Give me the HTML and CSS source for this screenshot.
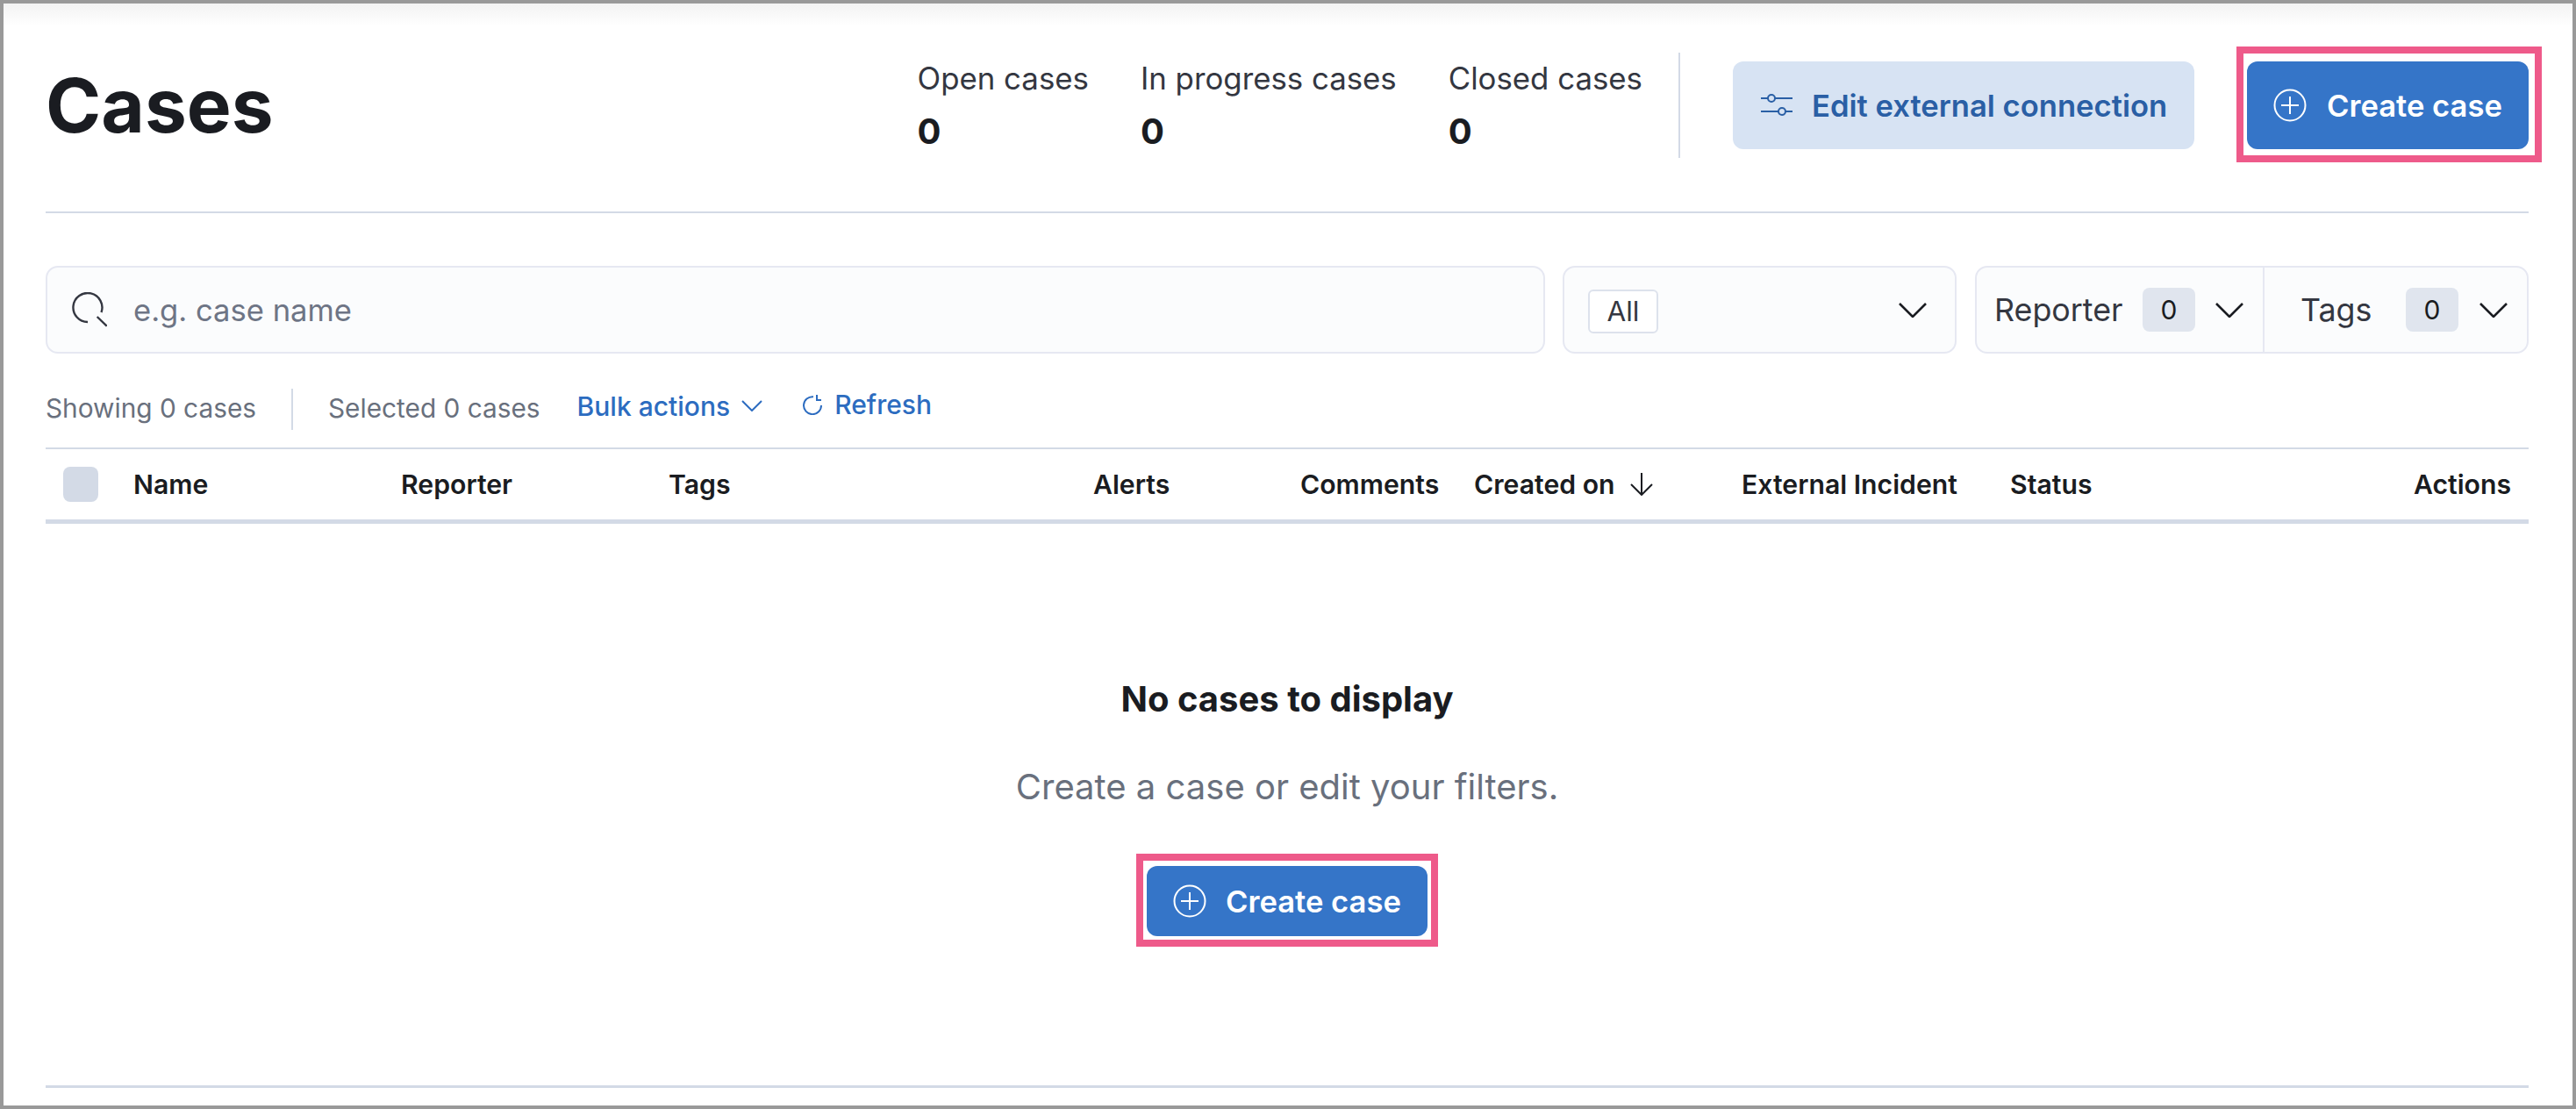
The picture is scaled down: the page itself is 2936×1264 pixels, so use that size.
FILE: index.html
```html
<!DOCTYPE html>
<html>

<head>
    <title>Cases</title>
    <meta charset="utf-8">
    <link rel="stylesheet" href="styles.css">
</head>

<body>
    <div class="frame">
        <header class="page-header">
            <h1 class="page-title">Cases</h1>
            <div class="stat">
                <span class="stat-label">Open cases</span>
                <span class="stat-value">0</span>
            </div>
            <div class="stat">
                <span class="stat-label">In progress cases</span>
                <span class="stat-value">0</span>
            </div>
            <div class="stat">
                <span class="stat-label">Closed cases</span>
                <span class="stat-value">0</span>
            </div>
            <div class="header-rule"></div>
            <button class="btn btn-light">
                <svg class="icon-controls" viewBox="0 0 36 26" fill="none" stroke="currentColor" stroke-width="2">
                    <path d="M0 5h8M16 5h20" />
                    <circle cx="12" cy="5" r="4" />
                    <path d="M0 20h20M28 20h8" />
                    <circle cx="24" cy="20" r="4" />
                </svg>
                Edit external connection
            </button>
            <div class="callout callout-top">
                <button class="btn btn-primary">
                    <svg class="icon-plus" viewBox="0 0 38 38" fill="none" stroke="currentColor" stroke-width="2">
                        <circle cx="19" cy="19" r="17.5" />
                        <path d="M19 9v20M9 19h20" />
                    </svg>
                    Create case
                </button>
            </div>
        </header>

        <div class="filters">
            <div class="search">
                <svg class="icon-search" viewBox="0 0 40 40" fill="none" stroke="#343741" stroke-width="2.4">
                    <path d="M18 34A16.5 16.5 0 1 1 33.5 23" />
                    <path d="M28.7 28L39.7 38.7" />
                </svg>
                <input class="search-input" type="text" placeholder="e.g. case name">
            </div>
            <div class="status-select">
                <span class="status-badge">All</span>
                <svg class="chevron" viewBox="0 0 32 17" fill="none" stroke="#1a1c21" stroke-width="2.6">
                    <path d="M1 1l15 15L31 1" />
                </svg>
            </div>
            <div class="filter-group">
                <div class="filter-item filter-reporter">
                    <span class="filter-name">Reporter</span>
                    <span class="filter-count">0</span>
                    <svg class="chevron" viewBox="0 0 32 17" fill="none" stroke="#1a1c21" stroke-width="2.6">
                        <path d="M1 1l15 15L31 1" />
                    </svg>
                </div>
                <div class="filter-item filter-tags">
                    <span class="filter-name">Tags</span>
                    <span class="filter-count">0</span>
                    <svg class="chevron" viewBox="0 0 32 17" fill="none" stroke="#1a1c21" stroke-width="2.6">
                        <path d="M1 1l15 15L31 1" />
                    </svg>
                </div>
            </div>
        </div>

        <div class="toolbar">
            <span class="toolbar-text">Showing 0 cases</span>
            <span class="toolbar-rule"></span>
            <span class="toolbar-text">Selected 0 cases</span>
            <a class="toolbar-link link-bulk">Bulk actions
                <svg class="icon-small-chevron" viewBox="0 0 24 13" fill="none" stroke="currentColor" stroke-width="2">
                    <path d="M1 1l11 11L23 1" />
                </svg>
            </a>
            <a class="toolbar-link link-refresh">
                <svg class="icon-refresh" viewBox="0 0 24 24" fill="none" stroke="currentColor" stroke-width="2">
                    <path d="M13 3.2A10 10 0 1 0 22 13" />
                    <path d="M17 1v6h5" />
                </svg>
                Refresh
            </a>
        </div>

        <div class="table-head">
            <div class="th th-check"><span class="checkbox"></span></div>
            <div class="th">Name</div>
            <div class="th">Reporter</div>
            <div class="th">Tags</div>
            <div class="th">Alerts</div>
            <div class="th">Comments</div>
            <div class="th">Created on
                <svg class="icon-arrow" viewBox="0 0 30 26" fill="none" stroke="#1a1c21" stroke-width="2">
                    <path d="M15 0v24M3 13l12 12 12-12" />
                </svg>
            </div>
            <div class="th">External Incident</div>
            <div class="th">Status</div>
            <div class="th th-actions">Actions</div>
        </div>

        <div class="empty">
            <h2 class="empty-title">No cases to display</h2>
            <p class="empty-text">Create a case or edit your filters.</p>
            <div class="callout callout-empty">
                <button class="btn btn-primary btn-small">
                    <svg class="icon-plus" viewBox="0 0 38 38" fill="none" stroke="currentColor" stroke-width="2">
                        <circle cx="19" cy="19" r="17.5" />
                        <path d="M19 9v20M9 19h20" />
                    </svg>
                    Create case
                </button>
            </div>
        </div>
    </div>
</body>

</html>
```

FILE: styles.css
```css
* {
    box-sizing: border-box;
}

body {
    margin: 0;
    font-family: "Inter", "Liberation Sans", sans-serif;
    color: #1a1c21;
    background-color: #fff;
}

.frame {
    width: 2936px;
    height: 1264px;
    overflow: hidden;
    border: 4px solid #999;
    padding: 0 50px 0 48px;
    background: linear-gradient(#f3f3f3, #fff 26px);
}

/* header */
.page-header {
    display: flex;
    align-items: center;
    height: 239px;
    padding: 66px 0 71px 0;
    border-bottom: 2px solid #d3dae6;
}

.page-title {
    margin: 0 auto 0 0;
    font-size: 85.5px;
    font-weight: 700;
    line-height: 100px;
}

.stat {
    display: flex;
    flex-direction: column;
    padding-top: 3px;
    margin-right: 59px;
}

.stat:nth-child(4) {
    margin-right: 41px;
}

.stat-label {
    font-size: 34.8px;
    line-height: 42px;
    color: #343741;
}

.stat-value {
    font-size: 40px;
    font-weight: 700;
    line-height: 50px;
    margin-top: 15px;
}

.header-rule {
    width: 2px;
    height: 120px;
    margin-right: 60px;
    background-color: #d3dae6;
}

.btn {
    display: flex;
    align-items: center;
    height: 100px;
    border: 0;
    border-radius: 12px;
    font-family: inherit;
    font-size: 34.6px;
    font-weight: 600;
    white-space: nowrap;
}

.btn-light {
    width: 526px;
    padding: 0 0 0 32px;
    margin-right: 60px;
    background-color: #d7e3f3;
    color: #2a5fa5;
}

.btn-primary {
    width: 321px;
    padding: 0 0 0 30px;
    background-color: #3575c8;
    color: #fff;
}

.btn-small {
    width: 320px;
    height: 80px;
}

.icon-controls {
    width: 36px;
    height: 26px;
    margin-right: 22px;
}

.icon-plus {
    width: 38px;
    height: 38px;
    margin-right: 23px;
}

.btn-small .icon-plus {
    margin-right: 22px;
}

.callout {
    position: relative;
}

.callout::after {
    content: "";
    position: absolute;
    border: 8px solid #ee5a8a;
}

.callout-top::after {
    inset: -17px -15px -15px -12px;
}

.callout-empty::after {
    inset: -14px -12px -12px -12px;
}

/* filters */
.filters {
    display: flex;
    height: 100px;
    margin-top: 60px;
}

.search,
.status-select,
.filter-group {
    display: flex;
    align-items: center;
    border: 2px solid #e6e8f2;
    border-radius: 14px;
    background-color: #fbfcfd;
}

.search {
    width: 1709px;
    padding-left: 28px;
    margin-right: 20px;
}

.icon-search {
    width: 40px;
    height: 40px;
    flex-shrink: 0;
    margin-right: 30px;
}

.search-input {
    flex: 1;
    border: 0;
    outline: 0;
    padding: 0;
    background: transparent;
    font-family: inherit;
    font-size: 34.6px;
}

.search-input::placeholder {
    color: #6e7585;
    opacity: 1;
}

.status-select {
    width: 449px;
    justify-content: space-between;
    padding: 0 32px 0 27px;
    margin-right: 21px;
}

.status-badge {
    width: 80px;
    height: 50px;
    margin-top: 3px;
    border: 2px solid #dde2ec;
    border-radius: 6px;
    background-color: #fff;
    font-size: 31.5px;
    line-height: 46px;
    text-align: center;
    color: #343741;
}

.chevron {
    width: 32px;
    height: 17px;
    flex-shrink: 0;
}

.filter-group {
    flex: 1;
}

.filter-item {
    display: flex;
    align-items: center;
    height: 100%;
}

.filter-reporter {
    width: 328px;
    padding-left: 20px;
    border-right: 2px solid #e6e8f2;
}

.filter-tags {
    padding-left: 41px;
}

.filter-name {
    font-size: 35.8px;
    color: #343741;
}

.filter-reporter .filter-name {
    width: 169px;
}

.filter-tags .filter-name {
    width: 120px;
}

.filter-count {
    width: 60px;
    height: 50px;
    margin-right: 24px;
    border-radius: 8px;
    background-color: #e0e5ee;
    font-size: 30px;
    line-height: 50px;
    text-align: center;
}

.filter-reporter .filter-count {
    margin-right: 23px;
}

/* toolbar */
.toolbar {
    display: flex;
    align-items: center;
    height: 47px;
    margin: 40px 0 20px;
    font-size: 29.8px;
}

.toolbar-text {
    color: #69707d;
    margin-top: -4px;
}

.toolbar-rule {
    width: 2px;
    height: 47px;
    margin: 0 40px;
    background-color: #d3dae6;
}

.toolbar-link {
    display: flex;
    align-items: center;
    font-size: 30px;
    font-weight: 500;
    color: #2c6cc0;
    margin-top: -12px;
}

.link-bulk {
    margin-left: 42px;
    margin-top: -8px;
}

.link-refresh {
    margin-left: 45px;
}

.icon-small-chevron {
    width: 24px;
    height: 13px;
    margin-left: 13px;
}

.icon-refresh {
    width: 24px;
    height: 24px;
    margin-right: 13px;
}

/* table */
.table-head {
    display: grid;
    grid-template-columns: 80px 305px 305px 484px 236px 198px 305px 306px 306px 1fr;
    align-items: center;
    height: 87px;
    border-top: 2px solid #d3dae6;
    border-bottom: 5px solid #d3dae6;
}

.th {
    display: flex;
    align-items: center;
    padding-left: 20px;
    font-size: 30.2px;
    font-weight: 600;
    white-space: nowrap;
}

.th-actions {
    justify-content: flex-end;
    padding-right: 20px;
}

.checkbox {
    width: 40px;
    height: 40px;
    border-radius: 8px;
    background-color: #d3dae6;
}

.icon-arrow {
    width: 30px;
    height: 26px;
    margin-left: 15px;
}

/* empty state */
.empty {
    display: flex;
    flex-direction: column;
    align-items: center;
    height: 643px;
    padding-top: 175px;
    border-bottom: 3px solid #d3dae6;
}

.empty-title {
    margin: 0;
    font-size: 40px;
    font-weight: 700;
    line-height: 50px;
}

.empty-text {
    margin: 50px 0 65px;
    font-size: 40px;
    line-height: 50px;
    color: #69707d;
}
```
